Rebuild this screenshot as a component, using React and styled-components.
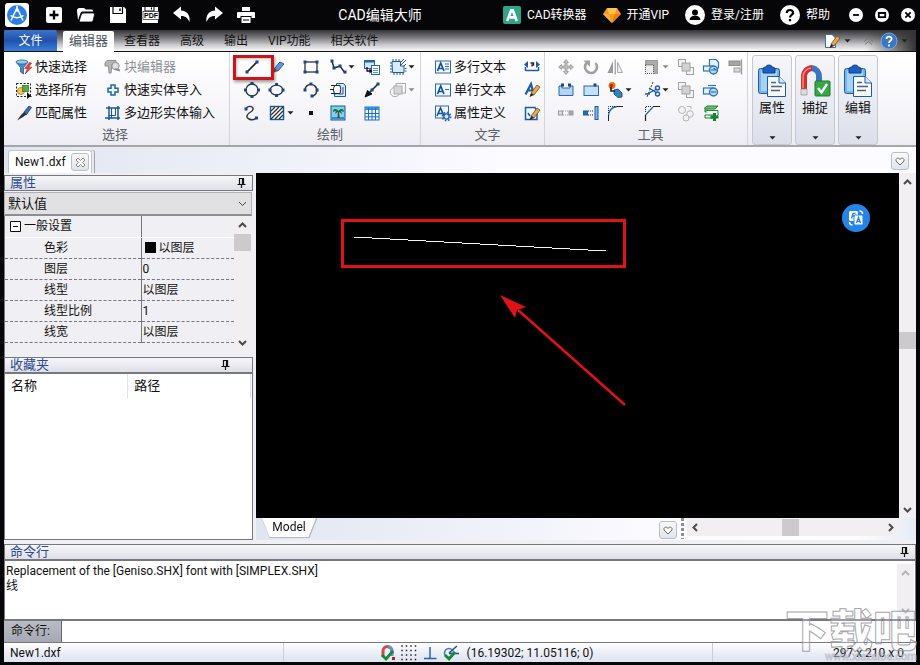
import React from "react";
import styled, { createGlobalStyle } from "styled-components";

const Global = createGlobalStyle`
  *, *::before, *::after { box-sizing: border-box; }
  body { margin: 0; background: #000; }
  body, button, input, select, table {
    font-family: Roboto, "Noto Sans CJK SC", sans-serif;
    font-size: 12px;
    line-height: 16px;
    color: #111;
  }
  button, input, select { margin: 0; padding: 0; border: 0; background: none; }
  svg { display: block; flex: none; }
`;

const NAVY = "#17478f";
const dot = (x, y) => <rect key={x + "-" + y} x={x - 1.5} y={y - 1.5} width="3" height="3" fill={NAVY} />;
const dots = (...pts) => pts.map(([x, y]) => dot(x, y));

/* ---------- icon drawings, all on an 18 x 18 grid ---------- */
const pencil = (
  <g>
    <path d="M8 12 L14 4 L17 6 L11 14 Z" fill="#e8a94a" stroke="#7a4a1b" strokeWidth=".8" />
    <path d="M8 12 L11 14 L6.5 16 Z" fill="#222" />
  </g>
);
const copies = (
  <g fill="#f4f4f4" stroke="#a2a2a2">
    <rect x="1.5" y="1.5" width="7" height="7" />
    <rect x="9.5" y="9.5" width="7" height="7" />
    <rect x="5" y="5" width="8" height="8" fill="#d2d2d2" />
  </g>
);
const ICONS = {
  funnel: (
    <g>
      <path d="M1 4 L13 4 L8.5 9.5 V16 L5.5 14 V9.5 Z" fill="#3e8fc9" stroke="#24618f" strokeWidth=".8" />
      <ellipse cx="7" cy="4" rx="6" ry="2" fill="#9ccbe8" stroke="#24618f" strokeWidth=".8" />
      <path d="M14.5 4.5 L9.5 10.5 L12.5 10.5 L10 16 L17 9.3 L13.8 9.2 L16.5 5 Z" fill="#e2463f" stroke="#a92727" strokeWidth=".6" />
    </g>
  ),
  selectAll: (
    <g>
      <rect x="1.5" y="2.5" width="14" height="13" fill="none" stroke="#222" strokeDasharray="2 1.5" />
      <circle cx="6" cy="10" r="3.6" fill="#f2c54b" stroke="#9a7414" strokeWidth=".7" />
      <rect x="7.5" y="4.5" width="6" height="6" fill="#58a844" stroke="#286e1f" strokeWidth=".7" />
      <path d="M12 11 L17 16 L14.5 16 L12 18 Z" fill="#111" />
    </g>
  ),
  brush: (
    <g>
      <path d="M9 8 L14 2 L16.5 3.5 L11.5 10.5 Z" fill="#3d6db3" stroke="#1c3b70" strokeWidth=".8" />
      <path d="M9 8 L11.5 10.5 L8 13 L2 16.5 L6 11 Z" fill="#2d3137" />
    </g>
  ),
  blockEdit: (
    <g fill="#b9b9b9" stroke="#8f8f8f">
      <path d="M3 2.5 H12 V6 H8 L7 15 H5 L4.5 8 L1 8 V5 Z" />
      <circle cx="11.5" cy="8" r="3.7" fill="#dedede" />
      <path d="M11 11 L16 12.5" strokeWidth="2" />
    </g>
  ),
  plus: <path d="M7 4 H11 V7.2 H14 V11 H11 V14 H7 V11 H4 V7.2 H7 Z" fill="#eaf6ff" stroke="#1f66a8" strokeWidth="1.5" />,
  polyInput: (
    <g fill="none" stroke="#17579c" strokeWidth="1.5">
      <path d="M5 2 V16 M14 2 V16 M2 4 H16 M1 14 H16" />
      <path d="M7.5 4 V14 M11.5 4 V11.5 H5" strokeWidth="1" />
    </g>
  ),
  line: <g><path d="M4 14 L14 4" stroke="#222" strokeWidth="1.6" />{dots([4, 14], [14, 4])}</g>,
  drawPen: (
    <g>
      <path d="M6 11 L12 4 L16 6 L10 13 Z" fill="#6696d6" stroke="#2b569d" />
      <path d="M6 11 L10 13 L5 15 Z" fill="#b03b35" />
    </g>
  ),
  rect: <g><rect x="3" y="4" width="12" height="10" fill="none" stroke="#222" strokeWidth="1.2" />{dots([3, 4], [15, 4], [3, 14], [15, 14])}</g>,
  polyline: <g><path d="M3 3 L5 10 L11 8 L16 15" fill="none" stroke="#222" strokeWidth="1.4" />{dots([3, 3], [5, 10], [11, 8], [16, 14])}</g>,
  insertBlock: (
    <g>
      <rect x="1.5" y="2.5" width="10" height="8" fill="#cfe6fa" stroke="#2864a8" />
      <path d="M1 3.5 H12" stroke="#2864a8" strokeWidth="2" />
      <rect x="8.5" y="7.5" width="8" height="9" fill="#fff" stroke="#2864a8" />
      <path d="M10 10.5 H15 M10 12.5 H15 M10 14.5 H15" stroke="#5d8fc8" />
      <path d="M4 9 V13 H7" fill="none" stroke="#111" strokeWidth="1.3" />
      <path d="M6.5 10.5 L9.5 13 L6.5 15.5 Z" fill="#111" />
    </g>
  ),
  boundary: (
    <g>
      <path d="M3 3.5 H11.5 V8 H15 V14.5 H3.5 Z" fill="#d7ecfb" stroke="#20599e" />
      <path d="M4 1 V3 M7 1 V3 M10 1 V3 M1 5 H3 M1 8 H3 M1 11 H3 M1 14 H3 M5 15 V17 M8 15 V17 M11 15 V17 M14 15 V17 M12 7 L17 2 M12 4 L15 1 M15 8 L17 6 M16 10.5 H17.5 M16 13 H17.5" stroke="#20599e" />
    </g>
  ),
  circle: <g><circle cx="9" cy="9" r="6" fill="none" stroke="#333" strokeWidth="1.3" />{dots([9, 2.5], [15.5, 9], [9, 15.5], [2.5, 9])}</g>,
  ellipse: <g><ellipse cx="8.5" cy="9" rx="6.2" ry="4.8" fill="none" stroke="#333" strokeWidth="1.3" />{dots([8.5, 3.5], [15, 9], [8.5, 14.5], [2, 9])}</g>,
  arc: <g><path d="M3 8 A6 6 0 1 1 11 15" fill="none" stroke="#333" strokeWidth="1.4" />{dots([3, 9], [9, 3], [15, 9], [10, 15])}</g>,
  sheet: (
    <g>
      <path d="M7.5 2.5 H14.5 L16.5 5 V15.5 H5.5 V13 H7.5 Z" fill="#d9eafa" stroke="#20599e" />
      <path d="M6.5 4.5 C4 6 4 9 5.5 12.5 H11 Q12.5 8 11 4.5 Z" fill="#f8fafd" stroke="#222" />
      <path d="M2 4.5 H11 M1 8.5 H5 M2 12.5 H6" stroke="#222" />
      <path d="M14 6 V13 H9" fill="none" stroke="#20599e" />
    </g>
  ),
  ray: <g><path d="M15 3 L7 11" stroke="#222" strokeWidth="1.6" /><path d="M2 16 L4.5 9.5 L9 13 Z" fill="#111" stroke="#111" />{dots([15, 3], [9, 9])}</g>,
  region: (
    <g fill="none" stroke="#a9a9a9">
      <rect x="7" y="2.5" width="9.5" height="9.5" />
      <circle cx="6" cy="11" r="4.7" />
      <rect x="5" y="5" width="8" height="8" fill="#d6d6d6" />
    </g>
  ),
  spline: <g><path d="M3 5 C5 0 13 3 9 7 C4 10 2 13 6 15 C9 16.5 11 16 13 14" fill="none" stroke="#333" strokeWidth="1.4" />{dots([3, 5], [13.5, 14])}</g>,
  hatch: (
    <g>
      <rect x="2.5" y="2.5" width="13" height="13" fill="#fff" stroke="#17579c" strokeWidth="1.4" />
      <path d="M3 7 L7 3 M3 11 L11 3 M3 15 L15 3 M7 15 L15 7 M11 15 L15 11" stroke="#333" strokeWidth="1.3" />
    </g>
  ),
  point: <rect x="7" y="7" width="4" height="4" fill="#111" />,
  image: (
    <g>
      <rect x="2" y="2" width="14" height="14" fill="#7fd0f2" stroke="#1a5a97" />
      <path d="M3 13 H15 V15 H3 Z" fill="#3b8ac2" />
      <path d="M9 7 L8.5 14 H10.5 L10 7" fill="#5a3f1d" />
      <path d="M9.5 7 C6 3.5 4 5.5 4 8 L7 6.7 L6 10 L9.5 7.5 L13 10 L12 6.7 L15 8 C15 5 12 3.5 9.5 7 Z" fill="#176f3a" />
    </g>
  ),
  table: (
    <g>
      <rect x="2" y="3" width="14" height="13" fill="#eef7ff" stroke="#1f6fbe" />
      <rect x="2" y="3" width="14" height="3" fill="#3e8fd9" />
      <path d="M5.5 4 V16 M9 4 V16 M12.5 4 V16 M2 9.5 H16 M2 12.8 H16" stroke="#1f6fbe" />
    </g>
  ),
  mtext: (
    <g>
      <rect x="1.5" y="3" width="15" height="12" fill="#f1f8ff" stroke="#2a68aa" />
      <path d="M3.5 13 L6.7 5 L10 13 M4.8 10.5 H8.8" fill="none" stroke="#174f97" strokeWidth="1.7" />
      <path d="M11 6 H15 M11 8.5 H15 M11 11 H15" stroke="#2a68aa" />
    </g>
  ),
  stext: (
    <g>
      <rect x="1.5" y="3" width="15" height="12" fill="#f1f8ff" stroke="#2a68aa" />
      <path d="M3.5 13 L6.7 5 L10 13 M4.8 10.5 H8.8" fill="none" stroke="#174f97" strokeWidth="1.7" />
      <path d="M11 8.5 H15" stroke="#2a68aa" />
    </g>
  ),
  attrdef: (
    <g>
      <rect x="1.5" y="2" width="13" height="12" fill="#f1f8ff" stroke="#2a68aa" />
      <path d="M3 12 L6.5 4 L10 12 M4.5 9.5 H8.5" fill="none" stroke="#174f97" strokeWidth="1.6" />
      <circle cx="12.5" cy="12.5" r="4" fill="none" stroke="#2a68aa" strokeWidth="2" strokeDasharray="1.6 1.5" />
      <circle cx="12.5" cy="12.5" r="2.6" fill="#cfe4f8" stroke="#2a68aa" strokeWidth="1.4" />
    </g>
  ),
  textWidth: (
    <g>
      <path d="M1 6.5 L5 3 V10 Z M17 6.5 L13 3 V10 Z" fill="#1d5ba6" />
      <path d="M7.5 5 H10.5 V7 H9 V8.5" fill="none" stroke="#222" strokeWidth="1.3" />
      <path d="M2.5 9 V13 M15.5 9 V13 M3 12.5 H15" fill="none" stroke="#1d5ba6" strokeWidth="1.5" />
    </g>
  ),
  textEdit: <g><path d="M2.5 13.5 L8 3 L10.5 12 M5 9.5 H10" fill="none" stroke="#1d5ba6" strokeWidth="2.2" />{pencil}</g>,
  noteEdit: <g><path d="M2.5 3.5 H12 L14 8 V15.5 H2.5 Z" fill="#eff7ff" stroke="#1d5ba6" strokeWidth="1.5" /><path d="M5 9 L7 12" stroke="#1d5ba6" strokeWidth="1.5" />{pencil}</g>,
  move: (
    <path d="M9 1.5 L11.5 4.5 H10 V8 H13.5 V6.5 L16.5 9 L13.5 11.5 V10 H10 V13.5 H11.5 L9 16.5 L6.5 13.5 H8 V10 H4.5 V11.5 L1.5 9 L4.5 6.5 V8 H8 V4.5 H6.5 Z" fill="#c2c2c2" stroke="#959595" strokeWidth=".8" />
  ),
  rotate: <g><path d="M5 4.5 A6 6 0 1 0 13.5 5" fill="none" stroke="#a0a0a0" strokeWidth="2.6" /><path d="M1.5 2.5 H8 V9 Z" fill="#a0a0a0" /></g>,
  mirror: <g><path d="M7 3 V15 H1.5 Z" fill="#999" /><path d="M11.5 4 V14.5 H16.5 Z" fill="#eee" stroke="#aaa" /><path d="M9.2 1.5 V16.5" stroke="#888" /></g>,
  scale: <g><path d="M2.5 2.5 H14.5 V15.5 H10.5 V7 H2.5 Z" fill="#ababab" stroke="#9a9a9a" /><rect x="2.5" y="7" width="8" height="8.5" fill="#eee" stroke="#555" strokeDasharray="1 1" /></g>,
  copies,
  groupIn: (
    <g fill="#e6f3fd" stroke="#2873b9" strokeWidth="1.2">
      <path d="M7.5 1.5 H14 L16.5 4 V10 H7.5 Z" />
      <rect x="1.5" y="8" width="9" height="5" />
      <circle cx="11.5" cy="12" r="4" fill="#b9daf4" strokeWidth="1.4" />
      <path d="M9 12 H14 L11.5 10" fill="none" />
    </g>
  ),
  groupOut: (
    <g fill="#e6f3fd" stroke="#2873b9" strokeWidth="1.2">
      <path d="M6 4.5 H14" />
      <rect x="1.5" y="7" width="9" height="6" />
      <circle cx="11.5" cy="11" r="4" fill="#b9daf4" strokeWidth="1.4" />
      <path d="M9 11 H14" />
    </g>
  ),
  align: <g><path d="M15.5 1.5 V16.5" stroke="#999" strokeWidth="1.3" /><rect x="3" y="3" width="11" height="4.5" fill="#a5a5a5" stroke="#8c8c8c" /><rect x="8" y="10" width="6" height="4" fill="#ddd" stroke="#999" /></g>,
  breakAt: <g><path d="M2 5 H5 V7 H13 V5 H16 V14.5 H2 Z" fill="#b4d6f4" stroke="#2a68aa" />{dots([5.5, 4], [12.5, 4])}</g>,
  join: <g><rect x="2" y="5" width="14.5" height="9.5" fill="#c5e0f7" stroke="#2a68aa" />{dots([13, 4])}</g>,
  explode: (
    <g>
      <circle cx="6" cy="4.5" r="3.5" fill="#ee6e22" />
      <circle cx="5.5" cy="4.5" r="1.6" fill="#a93012" />
      <path d="M8 9 L12 8 L16 12 V16 L12 16.5 L8 13 Z" fill="#3382c2" stroke="#1d5487" />
      <path d="M5 6 V10 H9" fill="none" stroke="#222" strokeWidth="1.6" />
    </g>
  ),
  trim: (
    <g>
      <path d="M10 1 L4 16" stroke="#333" strokeDasharray="2 1.5" />
      <path d="M2 13 H7 M6 7 L14 12 M6 12 L14 8" fill="none" stroke="#1d5ba6" strokeWidth="1.3" />
      <circle cx="14.5" cy="7" r="2" fill="none" stroke="#1d5ba6" strokeWidth="1.4" />
      <circle cx="14.5" cy="13" r="2" fill="none" stroke="#1d5ba6" strokeWidth="1.4" />
    </g>
  ),
  stretchGray: <g fill="#ddd" stroke="#999"><rect x="1.5" y="7" width="4" height="4" /><rect x="12" y="7" width="4" height="4" fill="#aaa" /><path d="M6 7 H12 M6 11 H12" strokeDasharray="1 1" /></g>,
  extend: (
    <g>
      <rect x="1.5" y="7" width="4" height="4" fill="#1d6fbf" stroke="#1d5ba6" />
      <path d="M6 7 H12 M6 11 H12" stroke="#222" strokeDasharray="1 1" />
      <rect x="13" y="2.5" width="3" height="13" fill="#7ab9ec" stroke="#1d5ba6" />
    </g>
  ),
  fillet: <g><path d="M2.5 12 Q3 3.5 11 2.5" fill="none" stroke="#2a68aa" strokeWidth="1.3" /><path d="M2.5 9 V2.5 H9" fill="none" stroke="#222" strokeDasharray="1 1" /><path d="M2.5 17 V11 M11 2.5 H17" stroke="#222" /></g>,
  chamfer: <g><path d="M2.5 11 L10 3" stroke="#2a68aa" strokeWidth="1.3" /><path d="M2.5 8 V2.5 H9" fill="none" stroke="#222" strokeDasharray="1 1" /><path d="M2.5 17 V11 M10 2.5 H17" stroke="#222" strokeWidth="1.2" /></g>,
  circles: <g fill="#f2f2f2" stroke="#b4b4b4"><circle cx="5" cy="6" r="3.5" /><circle cx="13" cy="10" r="3.3" /><circle cx="9" cy="14" r="3" /><path d="M10 2.5 H14 V5" fill="none" /></g>,
  layerAdd: (
    <g>
      <path d="M2 4.5 L5 2 H16 L13 5 H3 V8 H14" fill="#6bc46a" stroke="#237c33" />
      <path d="M3 8 L5 6.5 H16 V11 L13 14 H3 V11 H13" fill="#f1fbf1" stroke="#237c33" />
      <path d="M12.5 9 V17 M8.5 13 H16.5" stroke="#15832b" strokeWidth="3" />
    </g>
  ),
  quickEdit: <g><path d="M2.5 2.5 H9 L12.5 6 V15.5 H2.5 Z" fill="#fff" stroke="#3a6eaa" />{pencil}</g>,
  help: <g><circle cx="9" cy="9" r="8" fill="#3b76c4" stroke="#7ca6dd" /><path d="M6.5 7 C6.5 3.5 11.8 4 11.6 7 C11.4 8.7 9 9 9 11 M9 12.5 V14.5" fill="none" stroke="#fff" strokeWidth="1.8" /></g>,
  magnet: (
    <g>
      <path d="M4 13 V7 A4.5 4.5 0 0 1 13 7 V10" fill="none" stroke="#d14b4b" strokeWidth="3" />
      <path d="M9 3 A4.5 4.5 0 0 1 13 7 V12" fill="none" stroke="#6690cf" strokeWidth="3" />
      <path d="M3 11 L7 15 L14 7" fill="none" stroke="#118c32" strokeWidth="2.8" />
      <rect x="13" y="13" width="3" height="3" fill="#c21830" />
    </g>
  ),
  gridDots: <g fill="#222">{[2, 6.5, 11, 15.5].map((y) => [2, 6.5, 11, 15.5].map((x) => <rect key={x + "." + y} x={x - 0.75} y={y - 0.75} width="1.5" height="1.5" />))}</g>,
  ortho: <path d="M9 3 V14 M3 14.5 H15.5" stroke="#2a62b0" strokeWidth="1.5" />,
  track: (
    <g>
      <circle cx="7" cy="9" r="4.5" fill="none" stroke="#4179bd" strokeWidth="1.5" />
      <path d="M7 9 L15 2 M7 9.5 H17" stroke="#224b86" strokeWidth="1.4" />
      <path d="M3 11 L7 15 L13 8" fill="none" stroke="#118c32" strokeWidth="2.8" />
    </g>
  ),
  /* title bar */
  newFile: <g><rect x="1" y="1" width="16" height="16" rx="2" fill="#fff" /><path d="M9 4.5 V13.5 M4.5 9 H13.5" stroke="#000" strokeWidth="2.4" /></g>,
  open: <g><path d="M1 14 L0 5 Q0 2 2.5 2 H7 L9 3.5 H15 Q16 3.5 16 5.5 H5.5 Q4 5.5 3.5 7 Z" fill="#fff" /><path d="M6 7 H16 Q18 7 17.5 9 L16 15 Q15.5 16 14 16 H2 L4 9 Q4.5 7 6 7 Z" fill="#fff" stroke="#000" strokeWidth=".8" /></g>,
  save: <g><path d="M1 1 H15 L17 3 V17 H1 Z" fill="#fff" /><path d="M4 1 V7.5 H13.5 V1" fill="#fff" stroke="#000" strokeWidth="1.2" /><path d="M11 2.5 V5" stroke="#000" strokeWidth="1.4" /></g>,
  undo: <path d="M0 7 L8 0.5 V4.5 C14 5 17.5 9 16.5 16 C14.5 11.5 12 10 8 10 V13.5 Z" fill="#fff" />,
  redo: <path d="M18 7 L10 0.5 V4.5 C4 5 .5 9 1.5 16 C3.5 11.5 6 10 10 10 V13.5 Z" fill="#fff" />,
  print: <g fill="#fff"><rect x="5" y="1" width="8" height="4" /><path d="M1 6 H17 Q18 6 18 7 V12 H14.5 V10 H3.5 V12 H0 V7 Q0 6 1 6 Z" /><rect x="4.5" y="11" width="9" height="6" /><path d="M0 12.5 H3 M15 12.5 H18 M6 14 H12" stroke="#000" /></g>,
  convert: <g><rect width="18" height="18" rx="2" fill="#2fa588" /><path d="M4.2 15 L8.2 4.2 H9.8 L13.8 15 M7 11.4 H12" fill="none" stroke="#fff" strokeWidth="2.6" /></g>,
  gem: <g><path d="M4 2 H14 L18 8 L9 17 L0 8 Z" fill="#f59a1c" /><path d="M4 2 L6 8 H12 L14 2 Z" fill="#ffc24f" /><path d="M0 8 H6 L9 17 Z" fill="#ffae38" /><path d="M12 8 H18 L9 17 Z" fill="#e87f0c" /></g>,
};
function Icon({ name, size = 18 }) {
  return (
    <svg width={size} height={size} viewBox="0 0 18 18" aria-hidden="true">
      {ICONS[name]}
    </svg>
  );
}
const Caret = ({ muted }) => (
  <svg width="7" height="4" viewBox="0 0 7 4" aria-hidden="true">
    <path d="M.5 .3 H6.5 L3.5 3.6 Z" fill={muted ? "#8b8b8b" : "#222"} />
  </svg>
);
const CHEVRONS = { up: "M2 7 L5.5 3.5 L9 7", down: "M2 4 L5.5 7.5 L9 4", left: "M7 2 L3.5 5.5 L7 9", right: "M4 2 L7.5 5.5 L4 9" };
const Chevron = ({ dir, color = "#4a4a4a", weight = 2 }) => (
  <svg width="11" height="11" viewBox="0 0 11 11" aria-hidden="true">
    <path d={CHEVRONS[dir]} fill="none" stroke={color} strokeWidth={weight} />
  </svg>
);
const Pin = () => (
  <svg width="9" height="10" viewBox="0 0 9 10" aria-hidden="true">
    <path d="M2.5 6 V.5 H6.5 V6 M5.5 1 V6 M.5 6.5 H8.5 M4.5 7 V10" fill="none" stroke="#111" strokeWidth="1.2" />
  </svg>
);
const Heart = () => (
  <svg width="10" height="9" viewBox="0 0 10 9" aria-hidden="true">
    <path d="M5 8 L1 4 V2.5 L2.5 1 H3.5 L5 2.6 L6.5 1 H7.5 L9 2.5 V4 Z" fill="#fffef2" stroke="#6d6856" />
  </svg>
);

/* ---------- frame ---------- */
const Window = styled.div`
  position: relative;
  min-height: 100vh;
  display: flex;
  flex-direction: column;
  background: #060508;
  padding: 0 4px 3px;
`;
const Body = styled.div`
  flex: 1;
  display: flex;
  flex-direction: column;
  background: #f0eff3;
`;

/* ---------- title bar ---------- */
const TitleBar = styled.header`
  display: flex;
  align-items: center;
  height: 30px;
  color: #fff;
`;
const QuickBar = styled.div`
  display: flex;
  align-items: center;
  gap: 14px;
  width: 253px;
  padding-left: 1px;
`;
const QuickButton = styled.button`
  display: block;
  width: 18px;
`;
const LogoButton = styled(QuickButton)`
  width: 24px;
  margin-right: 2px;
`;
const Title = styled.h1`
  flex: 1;
  margin: 0;
  text-align: center;
  font-size: 14px;
  line-height: 20px;
  font-weight: 400;
`;
const Account = styled.nav`
  display: flex;
  align-items: center;
  gap: 16px;
`;
const AccountLink = styled.a`
  display: flex;
  align-items: center;
  gap: 6px;
  color: #fff;
  text-decoration: none;
  white-space: nowrap;
`;
const WindowButtons = styled.div`
  display: flex;
  gap: 12px;
  padding: 0 1px 0 3px;
`;
const WindowButton = styled.button`
  display: block;
  width: 14px;
`;

/* ---------- ribbon tabs ---------- */
const TabBar = styled.div`
  display: flex;
  align-items: flex-end;
  height: 22px;
  padding-right: 1px;
  background: linear-gradient(90deg, transparent calc(100% - 50px), #333 100%),
    linear-gradient(#353437, #77767a 35%, #c9c8cc 70%, #fafafa);
  border-bottom: 1px solid #111;
`;
const FileTab = styled.button`
  width: 53px;
  height: 21px;
  margin-right: 6px;
  border-radius: 2px 2px 0 0;
  background: linear-gradient(#3b74c9, #1f52ad 50%, #3a7fdc);
  color: #fff;
`;
const RibbonTab = styled.button`
  height: 21px;
  padding: 0 ${(p) => (p.$active ? "6px 2px" : "10px")};
  margin-bottom: ${(p) => (p.$active ? -1 : 0)}px;
  font-size: ${(p) => (p.$active ? 13 : 12)}px;
  color: ${(p) => (p.$active ? "#4c5460" : "#111")};
  background: ${(p) => (p.$active ? "#fff" : "none")};
  border-radius: 2px 2px 0 0;
`;
const TabTools = styled.div`
  flex: 1;
  display: flex;
  justify-content: flex-end;
  align-items: center;
  align-self: center;
  gap: 3px;
  padding-right: 7px;
`;
const TabTool = styled.button`
  display: flex;
  align-items: center;
  gap: 3px;
  margin-left: ${(p) => p.$space || 0}px;
`;

/* ---------- ribbon ---------- */
const Ribbon = styled.div`
  display: flex;
  height: 95px;
  background: linear-gradient(#fff, #f6f6fa 60%, #ececf2);
  border-bottom: 2px solid #a4a6ac;
`;
const Group = styled.section`
  display: flex;
  flex-direction: column;
  padding: 3px ${(p) => p.$end || 3}px 0 ${(p) => p.$start}px;
  border-right: 1px solid #d3d5dc;
`;
const ToolGrid = styled.div`
  display: grid;
  grid-template-columns: ${(p) => p.$cols};
  grid-auto-rows: 23px;
`;
const Tool = styled.button`
  position: relative;
  display: flex;
  align-items: center;
  gap: ${(p) => (p.$text ? 2 : 1)}px;
  font-size: 13px;
  white-space: nowrap;
  color: ${(p) => (p.$muted ? "#8d8f94" : "#111")};
`;
const GroupTitle = styled.h2`
  margin: 0;
  font-size: 13px;
  line-height: 22px;
  font-weight: 400;
  text-align: center;
  color: #5c6068;
`;
const Highlight = styled.span`
  position: absolute;
  z-index: 1;
  left: -10px;
  top: 0;
  width: 41px;
  height: 25px;
  border: 3px solid #c9151c;
  box-shadow: 1px 2px 3px #0006, inset 1px 1px 3px #0004;
`;
const BigButtons = styled.div`
  display: flex;
  gap: 3px;
  padding: 3px 4px 0;
`;
const BigButton = styled.button`
  display: flex;
  flex-direction: column;
  align-items: center;
  width: 40px;
  height: 90px;
  padding: 8px 0 4px;
  border: 1px solid #c5c8d0;
  border-radius: 3px;
  background: linear-gradient(#f6f6f9, #e9ebf2 50%, #dcdfe9);
  font-size: 13px;
  line-height: 20px;
  svg:last-child { margin-top: auto; }
`;

/* ---------- document tabs ---------- */
const DocBar = styled.div`
  display: flex;
  align-items: flex-end;
  height: 26px;
  padding: 0 7px 0 4px;
  background: linear-gradient(90deg, #dfe5f0, #fcfbff 55%);
`;
const DocTab = styled.div`
  display: flex;
  align-items: center;
  justify-content: space-between;
  width: 84px;
  height: 23px;
  padding: 0 2px 0 6px;
  background: #fff;
  border: 1px solid #c2c5cc;
  border-bottom: 0;
  border-radius: 3px 3px 0 0;
  box-shadow: 2px 0 0 #e8eaf0, 3px 0 0 #9fa3ab;
`;
const SmallButton = styled.button`
  display: flex;
  align-items: center;
  justify-content: center;
  width: 18px;
  height: 18px;
  border: 1px solid #b9bfc9;
  border-radius: 3px;
  background: linear-gradient(#f9f9fb, #dfe4ec);
`;
const DocMenu = styled.div`
  margin: 0 0 3px auto;
`;

/* ---------- work area ---------- */
const Work = styled.div`
  flex: 1;
  display: flex;
  gap: 3px;
`;
const Side = styled.aside`
  display: flex;
  flex-direction: column;
  width: 249px;
  padding-top: 2px;
`;
const PanelHeader = styled.div`
  display: flex;
  align-items: center;
  justify-content: space-between;
  height: 16px;
  padding: 0 ${(p) => p.$end || 6}px 0 5px;
  border: 1px solid #77787f;
  background: linear-gradient(#f6f6fa, #dfe0e7);
`;
const PanelTitle = styled.h3`
  margin: 0;
  font-size: 13px;
  line-height: 14px;
  font-weight: 400;
  color: #2a4c91;
`;
const PinButton = styled.button`
  display: block;
`;
const Combo = styled.label`
  display: flex;
  align-items: center;
  height: 24px;
  margin: 1px 1px 0 0;
  padding-right: 3px;
  background: #e1e0e3;
  border: 1px solid #b0b0b4;
  border-bottom: 2px solid #8d8e92;
`;
const ComboSelect = styled.select`
  flex: 1;
  appearance: none;
  padding-left: 3px;
  font-size: 13px;
  line-height: 18px;
`;
const PropArea = styled.div`
  display: flex;
  align-items: flex-start;
  height: 141px;
  padding: 0 2px 6px 0;
  border-left: 1px solid #77787f;
`;
const PropTable = styled.table`
  flex: 1;
  border-collapse: collapse;
  table-layout: fixed;
`;
const PropName = styled.th`
  width: 136px;
  height: 21px;
  padding: 0 0 0 ${(p) => (p.$section ? 5 : 39)}px;
  text-align: left;
  font-weight: 400;
  border-right: 1px solid #77787f;
  border-bottom: 1px ${(p) => (p.$section ? "solid #fff" : "dashed #77787f")};
`;
const PropValue = styled.td`
  height: 21px;
  padding: 0 1px;
  border-bottom: 1px ${(p) => (p.$section ? "solid #fff" : "dashed #77787f")};
`;
const Line = styled.span`
  display: flex;
  align-items: center;
  gap: 3px;
  height: 20px;
`;
const Swatch = styled.i`
  width: 11px;
  height: 11px;
  margin-left: 2px;
  background: #000;
`;
const Toggle = styled.button`
  display: block;
`;
const Favorites = styled.div`
  flex: 1;
  background: #fff;
  border: 1px solid #77787f;
`;
const FavTable = styled.table`
  width: 246px;
  border-collapse: collapse;
  font-size: 13px;
`;
const FavHead = styled.th`
  width: ${(p) => p.$w}px;
  height: 24px;
  padding: 0 6px;
  text-align: left;
  font-weight: 400;
  border-right: 1px solid #dfe3ea;
`;
const ScrollTrack = styled.div`
  display: flex;
  flex-direction: ${(p) => (p.$row ? "row" : "column")};
  align-items: center;
  justify-content: space-between;
  align-self: stretch;
  flex: ${(p) => (p.$row ? "0 0 212px" : "0 0 auto")};
  width: ${(p) => (p.$row ? "auto" : "17px")};
  padding: ${(p) => (p.$row ? "0 3px" : "4px 0 3px")};
  background: #f1eff2;
`;
const Thumb = styled.div`
  width: 17px;
  height: 17px;
  margin: ${(p) => p.$margin};
  background: #cccacd;
`;

const View = styled.main`
  flex: 1;
  display: flex;
  flex-direction: column;
  min-width: 0;
`;
const ViewRow = styled.div`
  flex: 1;
  display: flex;
`;
const Canvas = styled.div`
  position: relative;
  flex: 1;
  min-height: 200px;
  overflow: hidden;
  background: #000;
`;
const Drawing = styled.svg`
  width: 100%;
  height: 100%;
  position: absolute;
`;
const FloatButton = styled.button`
  position: absolute;
  right: 29px;
  top: 31px;
`;
const ViewFooter = styled.div`
  display: flex;
  align-items: flex-start;
  height: 22px;
  padding-right: 17px;
  background: linear-gradient(90deg, #e0e6f1, #fbfaff 60%, #fff 90%, #e6ebf4);
`;
const ModelTab = styled.button`
  height: 19px;
  width: 54px;
  margin: 0 auto 0 6px;
  background: #fff;
  clip-path: polygon(0 0, 100% 0, 86% 100%, 14% 100%);
  padding-bottom: 1px;
`;
const ModelEdge = styled.div`
  flex: 1;
  filter: drop-shadow(0 1px 0 #b5b8c0) drop-shadow(1px 0 0 #b5b8c0);
`;
const Splitter = styled.div`
  width: 3px;
  height: 21px;
  margin: 0 3px 0 4px;
  background: repeating-linear-gradient(#8c8e96 0 3px, transparent 3px 5px);
`;
const FooterMenu = styled.div`
  padding-top: 3px;
`;
const TrackSlot = styled.div`
  display: flex;
  height: 18px;
`;

/* ---------- command line ---------- */
const Command = styled.section`
  margin-top: 4px;
`;
const Log = styled.div`
  display: flex;
  justify-content: space-between;
  height: 61px;
  background: #fff;
  border: 1px solid #77787f;
  border-bottom-width: 2px;
  padding: 3px 1px 0;
`;
const LogText = styled.div`
  line-height: 15px;
`;
const Prompt = styled.div`
  display: flex;
  height: 21px;
`;
const PromptLabel = styled.label`
  width: 57px;
  padding-left: 7px;
  line-height: 20px;
  background: linear-gradient(#b9bcc5, #a6a9b3);
`;
const PromptInput = styled.input`
  flex: 1;
  min-width: 0;
  background: #fff;
  border-left: 1px solid #66676d;
`;

/* ---------- status bar ---------- */
const Status = styled.footer`
  display: grid;
  grid-template-columns: 280px 1fr 203px;
  height: 20px;
  align-items: center;
  background: linear-gradient(#fff, #e9ecf5 60%, #dfe4f0);
  border-top: 1px solid #77787f;
`;
const StatusCell = styled.div`
  display: flex;
  align-items: center;
  justify-content: ${(p) => p.$align};
  gap: 3px;
  height: 19px;
  padding: ${(p) => p.$pad};
  border-right: ${(p) => (p.$last ? 0 : 1)}px solid #c9ceda;
`;
const Coords = styled.span`
  padding-left: 4px;
`;
const Watermark = styled.div`
  position: absolute;
  right: 3px;
  bottom: 1px;
  width: 134px;
  text-align: right;
  pointer-events: none;
  font-size: 11px;
  line-height: 14px;
  color: #fff8;
  -webkit-text-stroke: 1px #9999a277;
`;
const WatermarkName = styled.div`
  font-family: "Noto Sans CJK SC", sans-serif;
  font-size: 44px;
  line-height: 44px;
  font-weight: 900;
  color: #fff4;
  -webkit-text-stroke: 1px #8e8e96cc;
`;

/* ---------- data ---------- */
const SELECT_TOOLS = [
  ["funnel", "快速选择"], ["blockEdit", "块编辑器", true],
  ["selectAll", "选择所有"], ["plus", "快速实体导入"],
  ["brush", "匹配属性"], ["polyInput", "多边形实体输入"],
];
const DRAW_TOOLS = [
  "line", "drawPen", "rect", "polyline+", "insertBlock", "boundary+",
  "circle", "ellipse", "arc", "sheet", "ray", "region-",
  "spline", "hatch+", "point", "image", "table",
];
const TEXT_TOOLS = [
  ["mtext", "多行文本"], ["textWidth"],
  ["stext", "单行文本"], ["textEdit"],
  ["attrdef", "属性定义"], ["noteEdit"],
];
const EDIT_TOOLS = [
  "move", "rotate", "mirror", "scale-", "copies", "groupIn", "align",
  "breakAt", "join", "explode+", "trim+", "copies", "groupOut", "",
  "stretchGray", "extend", "fillet", "chamfer", "circles", "layerAdd",
];
const PROPS = [["色彩", "以图层", true], ["图层", "0"], ["线型", "以图层"], ["线型比例", "1"], ["线宽", "以图层"]];

function IconTools({ items, marked }) {
  return items.map((item, i) => {
    const name = item.replace(/[+-]$/, "");
    if (!name) return <span key={i} />;
    return (
      <Tool key={i} aria-label={name}>
        <Icon name={name} />
        {item !== name && <Caret muted={item.endsWith("-")} />}
        {name === marked && <Highlight />}
      </Tool>
    );
  });
}
function LabelTools({ items }) {
  return items.map(([name, text, muted]) => (
    <Tool key={name} $text $muted={muted} disabled={muted} aria-label={text || name}>
      <Icon name={name} />
      {text}
    </Tool>
  ));
}

const Clipboard = () => (
  <svg width="30" height="34" viewBox="0 0 30 34" aria-hidden="true">
    <rect x="1.5" y="4.5" width="21" height="25" rx="2" fill="#77b4ec" stroke="#1a5cab" />
    <path d="M4 7 H20 V27 H4 Z" fill="#a6d2f6" />
    <path d="M6 5 Q6 3 9 3 Q9 1 12 1 Q15 1 15 3 Q18 3 18 5 V9 H6 Z" fill="#1c5fc0" stroke="#123f86" />
    <path d="M10.5 12.5 H22 L28.5 19 V32.5 H10.5 Z" fill="#f5faff" stroke="#1a5cab" />
    <path d="M22 12.5 V19 H28.5" fill="#d5e8fa" stroke="#1a5cab" />
    <path d="M14 18.5 H19 M14 22.5 H25 M14 26.5 H23" stroke="#56606f" strokeWidth="1.5" />
  </svg>
);
const BigMagnet = () => (
  <svg width="32" height="34" viewBox="0 0 32 34" aria-hidden="true">
    <path d="M5 26 V13 A8.5 8.5 0 0 1 13.5 4" fill="none" stroke="#d32f2f" strokeWidth="6" />
    <path d="M13 4 A8.5 8.5 0 0 1 20 13 V20" fill="none" stroke="#3d73c4" strokeWidth="6" />
    <path d="M4 24 V13 A9 9 0 0 1 12 4" fill="none" stroke="#f28b86" strokeWidth="1.5" />
    <path d="M2 25 H8 V31 H2 Z" fill="#d9dce2" stroke="#888" strokeWidth=".6" />
    <rect x="16" y="17" width="15" height="15" rx="1" fill="#35a744" stroke="#1c7a2c" />
    <path d="M19 24 L22.5 28.5 L28 20" fill="none" stroke="#fff" strokeWidth="2.4" />
  </svg>
);

export default function App() {
  return (
    <Window>
      <Global />
      <TitleBar>
        <QuickBar>
          <LogoButton aria-label="CAD">
            <svg width="24" height="24" viewBox="0 0 24 24" aria-hidden="true">
              <rect width="24" height="24" rx="3" fill="#fff" />
              <circle cx="12" cy="12" r="10" fill="#2d7fe8" />
              <path d="M12 2.5 V6 M11 7 L6 17.5 M13 7 L18 17.5 M5.5 12.5 Q12 17 18.5 12.5" fill="none" stroke="#fff" strokeWidth="1.5" />
              <circle cx="12" cy="7" r="1.8" fill="#fff" />
            </svg>
          </LogoButton>
          <QuickButton aria-label="新建"><Icon name="newFile" /></QuickButton>
          <QuickButton aria-label="打开"><Icon name="open" /></QuickButton>
          <QuickButton aria-label="保存"><Icon name="save" /></QuickButton>
          <QuickButton aria-label="PDF">
            <svg width="18" height="18" viewBox="0 0 18 18" aria-hidden="true">
              <path d="M1 1 H17 V17 H1 Z" fill="#fff" />
              <path d="M4 1 V5 H13 V1 M10.5 1.5 V3.5" fill="none" stroke="#000" />
              <rect x="2" y="5.5" width="16" height="8" fill="#fff" stroke="#000" strokeWidth=".6" />
              <text x="10" y="12" textAnchor="middle" fontSize="7" fontWeight="700" fontFamily="Liberation Sans, sans-serif">PDF</text>
            </svg>
          </QuickButton>
          <QuickButton aria-label="撤销"><Icon name="undo" /></QuickButton>
          <QuickButton aria-label="重做"><Icon name="redo" /></QuickButton>
          <QuickButton aria-label="打印"><Icon name="print" /></QuickButton>
        </QuickBar>
        <Title>CAD编辑大师</Title>
        <Account>
          <AccountLink href="#convert"><Icon name="convert" />CAD转换器</AccountLink>
          <AccountLink href="#vip"><Icon name="gem" />开通VIP</AccountLink>
          <AccountLink href="#login">
            <svg width="20" height="20" viewBox="0 0 20 20" aria-hidden="true">
              <circle cx="10" cy="10" r="10" fill="#fff" />
              <circle cx="10" cy="7.5" r="3" />
              <path d="M4.5 15 Q5 10.8 10 10.8 Q15 10.8 15.5 15 Z" />
            </svg>
            登录/注册
          </AccountLink>
          <AccountLink href="#help">
            <svg width="20" height="20" viewBox="0 0 20 20" aria-hidden="true">
              <circle cx="10" cy="10" r="10" fill="#fff" />
              <path d="M6.8 8 C6.8 3.8 13.3 4.2 13.1 8 C12.8 10 10 10 10 12.5 M10 14 V16.3" fill="none" stroke="#000" strokeWidth="2.2" />
            </svg>
            帮助
          </AccountLink>
          <WindowButtons>
            {[["最小化", "M4 7 H10"], ["最大化", "M3.8 5 H10.2 V9.2 H3.8 Z"], ["关闭", "M4.3 4.3 L9.7 9.7 M9.7 4.3 L4.3 9.7"]].map(([label, d]) => (
              <WindowButton key={label} aria-label={label}>
                <svg width="14" height="14" viewBox="0 0 14 14" aria-hidden="true">
                  <circle cx="7" cy="7" r="7" fill="#fff" />
                  <path d={d} fill="none" stroke="#000" strokeWidth="1.8" />
                </svg>
              </WindowButton>
            ))}
          </WindowButtons>
        </Account>
      </TitleBar>

      <Body>
        <TabBar>
          <FileTab>文件</FileTab>
          {["编辑器", "查看器", "高级", "输出", "VIP功能", "相关软件"].map((t, i) => (
            <RibbonTab key={t} $active={i === 0}>{t}</RibbonTab>
          ))}
          <TabTools>
            <TabTool aria-label="快速编辑"><Icon name="quickEdit" /><Caret /></TabTool>
            <TabTool $space={9} aria-label="收起">
              <svg width="11" height="8" viewBox="0 0 11 8" aria-hidden="true">
                <path d="M1 4.5 L5.5 1 L10 4.5 M2 7.5 L5.5 4.5 L9 7.5" fill="none" stroke="#77767c" />
              </svg>
            </TabTool>
            <TabTool $space={3} aria-label="帮助"><Icon name="help" /><Caret /></TabTool>
          </TabTools>
        </TabBar>

        <Ribbon>
          <Group $start={11} $end={14}>
            <ToolGrid $cols="89px auto"><LabelTools items={SELECT_TOOLS} /></ToolGrid>
            <GroupTitle>选择</GroupTitle>
          </Group>
          <Group $start={13}>
            <ToolGrid $cols="25px 34px 27px 34px 26px 28px"><IconTools items={DRAW_TOOLS} marked="line" /></ToolGrid>
            <GroupTitle>绘制</GroupTitle>
          </Group>
          <Group $start={13}>
            <ToolGrid $cols="89px 18px"><LabelTools items={TEXT_TOOLS} /></ToolGrid>
            <GroupTitle>文字</GroupTitle>
          </Group>
          <Group $start={12}>
            <ToolGrid $cols="25px 24px 37px 34px 25px 24px 18px"><IconTools items={EDIT_TOOLS} /></ToolGrid>
            <GroupTitle>工具</GroupTitle>
          </Group>
          <BigButtons>
            <BigButton><Clipboard />属性<Caret /></BigButton>
            <BigButton><BigMagnet />捕捉<Caret /></BigButton>
            <BigButton><Clipboard />编辑<Caret /></BigButton>
          </BigButtons>
        </Ribbon>

        <DocBar>
          <DocTab>
            New1.dxf
            <SmallButton aria-label="关闭 New1.dxf">
              <svg width="11" height="11" viewBox="0 0 11 11" aria-hidden="true">
                <path d="M3 1 L5.5 3.5 L8 1 L10 3 L7.5 5.5 L10 8 L8 10 L5.5 7.5 L3 10 L1 8 L3.5 5.5 L1 3 Z" fill="#fff" stroke="#85837b" />
              </svg>
            </SmallButton>
          </DocTab>
          <DocMenu><SmallButton aria-label="文档列表"><Heart /></SmallButton></DocMenu>
        </DocBar>

        <Work>
          <Side>
            <PanelHeader><PanelTitle>属性</PanelTitle><PinButton aria-label="固定"><Pin /></PinButton></PanelHeader>
            <Combo>
              <ComboSelect aria-label="属性集" defaultValue="默认值"><option>默认值</option></ComboSelect>
              <Chevron dir="down" weight={1} />
            </Combo>
            <PropArea>
              <PropTable>
                <tbody>
                  <tr>
                    <PropName $section scope="row">
                      <Line>
                        <Toggle aria-label="折叠">
                          <svg width="11" height="11" viewBox="0 0 11 11" aria-hidden="true">
                            <path d="M.5 .5 H10.5 V10.5 H.5 Z M3 5.5 H8" fill="#fff" stroke="#111" />
                          </svg>
                        </Toggle>
                        一般设置
                      </Line>
                    </PropName>
                    <PropValue $section />
                  </tr>
                  {PROPS.map(([name, value, swatch]) => (
                    <tr key={name}>
                      <PropName scope="row">{name}</PropName>
                      <PropValue><Line>{swatch && <Swatch />}{value}</Line></PropValue>
                    </tr>
                  ))}
                </tbody>
              </PropTable>
              <ScrollTrack><Chevron dir="up" /><Thumb $margin="3px 0 auto" /><Chevron dir="down" /></ScrollTrack>
            </PropArea>
            <PanelHeader $end={22}><PanelTitle>收藏夹</PanelTitle><PinButton aria-label="固定"><Pin /></PinButton></PanelHeader>
            <Favorites>
              <FavTable>
                <thead><tr><FavHead $w={123}>名称</FavHead><FavHead $w={123}>路径</FavHead></tr></thead>
              </FavTable>
            </Favorites>
          </Side>

          <View>
            <ViewRow>
              <Canvas>
                <Drawing>
                  <path d="M98 64 L350 78" stroke="#f4f4f4" fill="none" shapeRendering="crispEdges" />
                  <rect x="86.5" y="47.5" width="282" height="46" fill="none" stroke="#e01217" strokeWidth="3" />
                  <path d="M369 232 L262 137" stroke="#e01217" strokeWidth="2.5" />
                  <path d="M244 122 L270 134 L261 137 L259 145 Z" fill="#e01217" />
                </Drawing>
                <FloatButton aria-label="翻译">
                  <svg width="28" height="28" viewBox="0 0 28 28" aria-hidden="true">
                    <circle cx="14" cy="14" r="14" fill="#2484e8" />
                    <rect x="7" y="7" width="9" height="10" rx="1.5" fill="#fff" />
                    <rect x="12" y="11" width="9" height="10" rx="1.5" fill="#fff" stroke="#2484e8" />
                    <path d="M9.5 14.5 L11 9.5 H13.5 M10 12 H12.5 M14.5 19 L16.5 13.5 L18.5 19 M15 17.3 H18" fill="none" stroke="#2484e8" strokeWidth="1.3" />
                    <path d="M17.5 7 Q20.5 7 20.5 10 M7.5 18 Q7.5 21 10.5 21" fill="none" stroke="#fff" strokeWidth="1.5" />
                  </svg>
                </FloatButton>
              </Canvas>
              <ScrollTrack><Chevron dir="up" /><Thumb $margin="0 0 12px" /><Chevron dir="down" /></ScrollTrack>
            </ViewRow>
            <ViewFooter>
              <ModelEdge><ModelTab>Model</ModelTab></ModelEdge>
              <FooterMenu><SmallButton aria-label="布局列表"><Heart /></SmallButton></FooterMenu>
              <Splitter />
              <TrackSlot><ScrollTrack $row><Chevron dir="left" /><Thumb $margin="0 6px 0 0" /><Chevron dir="right" /></ScrollTrack></TrackSlot>
            </ViewFooter>
          </View>
        </Work>

        <Command>
          <PanelHeader><PanelTitle>命令行</PanelTitle><PinButton aria-label="固定"><Pin /></PinButton></PanelHeader>
          <Log>
            <LogText role="log">
              <div>Replacement of the [Geniso.SHX] font with [SIMPLEX.SHX]</div>
              <div>线</div>
            </LogText>
            <ScrollTrack><Chevron dir="up" color="#b5b4b8" /><Chevron dir="down" color="#b5b4b8" /></ScrollTrack>
          </Log>
          <Prompt>
            <PromptLabel htmlFor="command">命令行:</PromptLabel>
            <PromptInput id="command" />
          </Prompt>
        </Command>
        <Status>
          <StatusCell $align="flex-start" $pad="0 0 0 6px">New1.dxf</StatusCell>
          <StatusCell $align="center" $pad="0 24px 0 0">
            {["magnet", "gridDots", "ortho", "track"].map((n) => (
              <Tool key={n} aria-label={n}><Icon name={n} /></Tool>
            ))}
            <Coords>(16.19302; 11.05116; 0)</Coords>
          </StatusCell>
          <StatusCell $last $align="flex-end" $pad="0 12px 0 0">297 x 210 x 0</StatusCell>
        </Status>
      </Body>
      <Watermark aria-hidden="true">
        <WatermarkName>下载吧</WatermarkName>
        www.xiazaiba.com
      </Watermark>
    </Window>
  );
}
